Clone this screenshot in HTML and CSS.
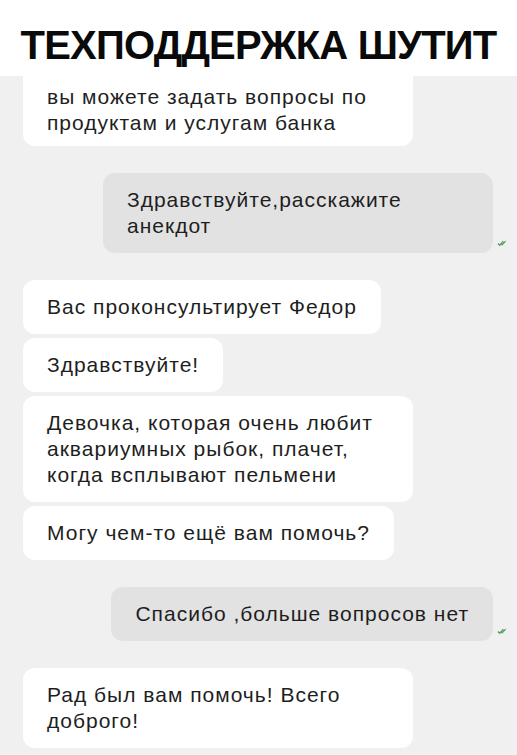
FILE: index.html
```html
<!DOCTYPE html>
<html lang="ru">
<head>
  <meta charset="UTF-8" />
  <meta name="viewport" content="width=device-width, initial-scale=1.0" />
  <title>Техподдержка шутит</title>
  <link rel="stylesheet" href="styles.css">
</head>
<body>
<div class="header">
  <h1>ТЕХПОДДЕРЖКА ШУТИТ</h1>
</div>

<div class="chat">
  <div class="msg in first">вы можете задать вопросы по продуктам и услугам банка</div>

  <div class="msg out gap">Здравствуйте,расскажите анекдот
    <svg class="check" viewBox="0 0 12 8"><path d="M1 4.5l2 2L7 2M5 6.5L9.5 2" /></svg>
  </div>

  <div class="msg in gap">Вас проконсультирует Федор</div>
  <div class="msg in">Здравствуйте!</div>
  <div class="msg in">Девочка, которая очень любит аквариумных рыбок, плачет, когда всплывают пельмени</div>
  <div class="msg in">Могу чем-то ещё вам помочь?</div>

  <div class="msg out gap">Спасибо ,больше вопросов нет
    <svg class="check" viewBox="0 0 12 8"><path d="M1 4.5l2 2L7 2M5 6.5L9.5 2" /></svg>
  </div>

  <div class="msg in gap">Рад был вам помочь! Всего доброго!</div>
</div>
</body>
</html>
```

FILE: styles.css
```css
body { margin: 0; background: #f0f0f0; font-family: "Liberation Sans", Arial, sans-serif; color: #1e1e1e; }
.header { background: white; height: 76px; display: flex; align-items: center; justify-content: center; }
.header h1 { margin: 0; font-size: 40px; font-weight: bold; color: #0a0a0a; letter-spacing: -0.8px; padding-top: 14px; white-space: nowrap; }

.chat { display: flex; flex-direction: column; gap: 4px; padding: 0 24px 0 23px; }
.msg { position: relative; max-width: 342px; padding: 14px 24px; border-radius: 12px; font-size: 21px; line-height: 26px; letter-spacing: 1px; }
.msg.in { align-self: flex-start; background: white; }
.msg.out { align-self: flex-end; background: #e2e2e2; }
.msg.first { border-radius: 0 0 12px 12px; padding-top: 8px; padding-bottom: 10px; }
.gap { margin-top: 23px; }
.check { position: absolute; right: -15px; bottom: 6px; width: 11px; height: 8px; fill: none; stroke: #4fa360; stroke-width: 1.4; }
```
